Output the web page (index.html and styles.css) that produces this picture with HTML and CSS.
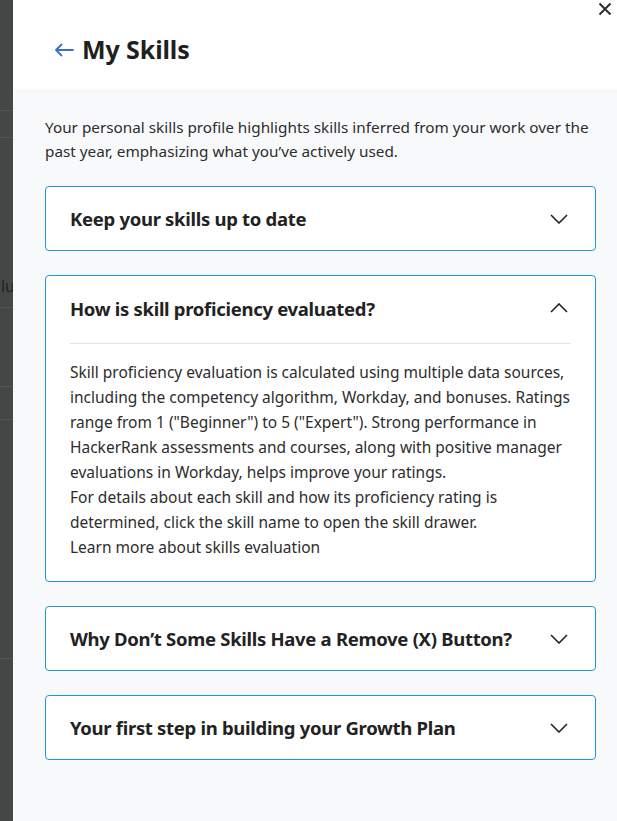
FILE: index.html
```html
<!DOCTYPE html>
<html lang="en">
<head>
<meta charset="utf-8">
<title>My Skills</title>
<link rel="stylesheet" href="styles.css">
</head>
<body>
<div class="page">
  <div class="backdrop">
    <div class="bd-row r1"></div>
    <div class="bd-row r2"></div>
    <div class="bd-row r3"><span class="bd-text">lu</span></div>
    <div class="bd-row r4"></div>
    <div class="bd-row r5"></div>
    <div class="bd-row r6"></div>
  </div>
  <div class="drawer">
    <button class="close" aria-label="Close">
      <svg width="14" height="14" viewBox="0 0 14 14"><path d="M1.5 1.5 L12.5 12.5 M12.5 1.5 L1.5 12.5" stroke="#2b2d31" stroke-width="2" fill="none"/></svg>
    </button>
    <header class="header">
      <svg class="back" width="20" height="14" viewBox="0 0 20 14"><path d="M19 7 H2 M7.5 1.5 L2 7 L7.5 12.5" stroke="#3b6fc6" stroke-width="1.8" fill="none" stroke-linecap="round" stroke-linejoin="round"/></svg>
      <h1 class="title">My Skills</h1>
    </header>
    <main class="content">
      <p class="intro">Your personal skills profile highlights skills inferred from your work over the past year, emphasizing what you’ve actively used.</p>
      <section class="card">
        <div class="card-head">
          <h2 class="card-title">Keep your skills up to date</h2>
          <svg class="chev" width="18" height="10" viewBox="0 0 18 10"><path d="M1 1 L9 9 L17 1" stroke="#222" stroke-width="1.6" fill="none"/></svg>
        </div>
      </section>
      <section class="card open">
        <div class="card-head">
          <h2 class="card-title">How is skill proficiency evaluated?</h2>
          <svg class="chev" width="18" height="10" viewBox="0 0 18 10"><path d="M1 9 L9 1 L17 9" stroke="#222" stroke-width="1.6" fill="none"/></svg>
        </div>
        <div class="card-body">
          <p>Skill proficiency evaluation is calculated using multiple data sources, including the competency algorithm, Workday, and bonuses. Ratings range from 1 ("Beginner") to 5 ("Expert"). Strong performance in HackerRank assessments and courses, along with positive manager evaluations in Workday, helps improve your ratings.</p>
          <p>For details about each skill and how its proficiency rating is determined, click the skill name to open the skill drawer.</p>
          <p>Learn more about skills evaluation</p>
        </div>
      </section>
      <section class="card">
        <div class="card-head">
          <h2 class="card-title">Why Don’t Some Skills Have a Remove (X) Button?</h2>
          <svg class="chev" width="18" height="10" viewBox="0 0 18 10"><path d="M1 1 L9 9 L17 1" stroke="#222" stroke-width="1.6" fill="none"/></svg>
        </div>
      </section>
      <section class="card">
        <div class="card-head">
          <h2 class="card-title">Your first step in building your Growth Plan</h2>
          <svg class="chev" width="18" height="10" viewBox="0 0 18 10"><path d="M1 1 L9 9 L17 1" stroke="#222" stroke-width="1.6" fill="none"/></svg>
        </div>
      </section>
    </main>
  </div>
</div>
</body>
</html>
```

FILE: styles.css
```css
* { box-sizing: border-box; }
html, body { margin: 0; padding: 0; height: 100%; }
body {
  font-family: "Noto Sans", "Open Sans", sans-serif;
  color: #2b2b2b;
}
.page {
  display: flex;
  height: 821px;
  overflow: hidden;
}
.backdrop {
  width: 13px;
  flex: none;
  background: #434846;
  display: flex;
  flex-direction: column;
  overflow: hidden;
}
.bd-row { border-bottom: 1px solid #525755; }
.r1 { height: 111px; }
.r2 { height: 27px; }
.r3 { height: 170px; position: relative; overflow: hidden; }
.bd-text {
  position: absolute;
  right: -2px;
  top: 138px;
  font-size: 16px;
  line-height: 20px;
  color: #1f2221;
}
.r4 { height: 79px; }
.r5 { height: 33px; }
.r6 { height: 239px; }
.drawer {
  flex: 1;
  display: flex;
  flex-direction: column;
  background: #f8f9fb;
  position: relative;
}
.close {
  position: absolute;
  top: 2px;
  right: 5px;
  border: 0;
  background: none;
  padding: 0;
  width: 14px;
  height: 14px;
  display: flex;
}
.header {
  height: 89px;
  flex: none;
  background: #fff;
  display: flex;
  align-items: center;
  padding: 9px 0 0 41px;
  gap: 8px;
}
.back { margin-top: 1px; }
.title {
  margin: 0;
  font-size: 25px;
  font-weight: 700;
  color: #1f1f1f;
  letter-spacing: -0.1px;
}
.content {
  padding: 26px 21px 0 32px;
  display: flex;
  flex-direction: column;
  gap: 24px;
}
.intro {
  margin: 0 0 -1px;
  font-size: 15.3px;
  line-height: 24px;
  color: #2d2d2d;
}
.card {
  background: #fff;
  border: 1px solid #1f98d6;
  border-radius: 4px;
}
.card-head {
  height: 63px;
  display: flex;
  align-items: center;
  justify-content: space-between;
  padding: 0 27px 0 24px;
}
.card-title {
  margin: 0;
  font-size: 18.5px;
  font-weight: 700;
  color: #222;
  letter-spacing: -0.3px;
}
.open .card-head { height: 67px; padding-bottom: 3px; }
.card-body {
  margin: 0 24px;
  border-top: 1px solid #e1e3e6;
  padding: 16px 0 21px;
}
.card-body p {
  margin: 0;
  font-size: 15.5px;
  line-height: 25px;
  color: #2d2d2d;
}
```
